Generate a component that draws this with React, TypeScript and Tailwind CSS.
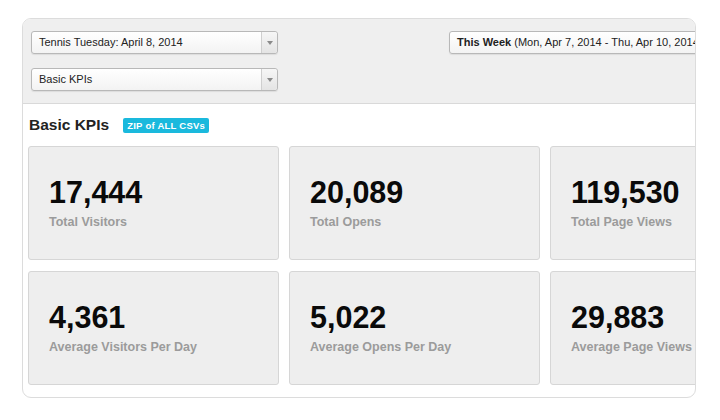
import React from 'react';

interface Kpi {
  value: string;
  label: string;
}

const kpis: Kpi[] = [
  { value: '17,444', label: 'Total Visitors' },
  { value: '20,089', label: 'Total Opens' },
  { value: '119,530', label: 'Total Page Views' },
  { value: '4,361', label: 'Average Visitors Per Day' },
  { value: '5,022', label: 'Average Opens Per Day' },
  { value: '29,883', label: 'Average Page Views Per Day' },
];

const SelectBox: React.FC<{ text: string }> = ({ text }) => (
  <div className="flex h-[23px] w-[247px] items-stretch rounded-[3px] border border-[#b8b8b8] bg-gradient-to-b from-white to-[#f3f3f3] shadow-[0_1px_1px_rgba(0,0,0,0.08)]">
    <div className="flex flex-1 items-center pl-[7px] text-[11px] text-[#222]">{text}</div>
    <div className="flex w-[16px] items-center justify-center rounded-r-[3px] border-l border-[#cfcfcf] bg-gradient-to-b from-[#f6f6f6] to-[#e4e4e4]">
      <svg width="6" height="4" viewBox="0 0 6 4">
        <path d="M0 0 L6 0 L3 4 Z" fill="#8a8a8a" />
      </svg>
    </div>
  </div>
);

export default function App() {
  return (
    <div className="min-h-[420px] w-[720px] bg-white pl-[22px] pt-[18px] font-['Liberation_Sans',Arial,sans-serif]">
      <div className="h-[380px] w-[674px] overflow-hidden rounded-[9px] border border-[#dcdcdc] bg-white">
        {/* filters */}
        <div className="flex h-[85px] border-b border-[#d9d9d9] bg-[#efefef] pl-[8px] pt-[12px]">
          <div className="flex flex-col gap-[14px]">
            <SelectBox text="Tennis Tuesday: April 8, 2014" />
            <SelectBox text="Basic KPIs" />
          </div>
          <div className="ml-[171px] flex h-[23px] w-[260px] shrink-0 items-center whitespace-nowrap rounded-[3px] border border-[#b8b8b8] bg-gradient-to-b from-white to-[#f3f3f3] pl-[7px] text-[11px] text-[#222] shadow-[0_1px_1px_rgba(0,0,0,0.08)]">
            <span className="font-bold">This Week</span>
            <span>&nbsp;(Mon, Apr 7, 2014 - Thu, Apr 10, 2014)</span>
          </div>
        </div>

        {/* body */}
        <div className="pl-[5px] pt-[11px]">
          <div className="flex h-[20px] items-center pl-[1px]">
            <h2 className="text-[15.5px] font-bold leading-[20px] text-[#222]">Basic KPIs</h2>
            <span className="ml-[14px] rounded-[2px] bg-[#1ab9dd] px-[4px] text-[9.5px] font-bold leading-[15px] tracking-[0.25px] text-white">
              ZIP of ALL CSVs
            </span>
          </div>
          <div className="mt-[11px] grid grid-cols-[251px_251px_251px] gap-x-[10px] gap-y-[11px]">
            {kpis.map((k) => (
              <div
                key={k.label}
                className="h-[114px] overflow-hidden whitespace-nowrap rounded-[3px] border border-[#d6d6d6] bg-[#eeeeee] pl-[20px] pt-[29px]"
              >
                <div className="text-[30.5px] font-bold leading-[32px] text-[#0a0a0a]">{k.value}</div>
                <div className="mt-[6px] text-[12.5px] font-bold leading-[16px] text-[#9b9b9b]">{k.label}</div>
              </div>
            ))}
          </div>
        </div>
      </div>
    </div>
  );
}
